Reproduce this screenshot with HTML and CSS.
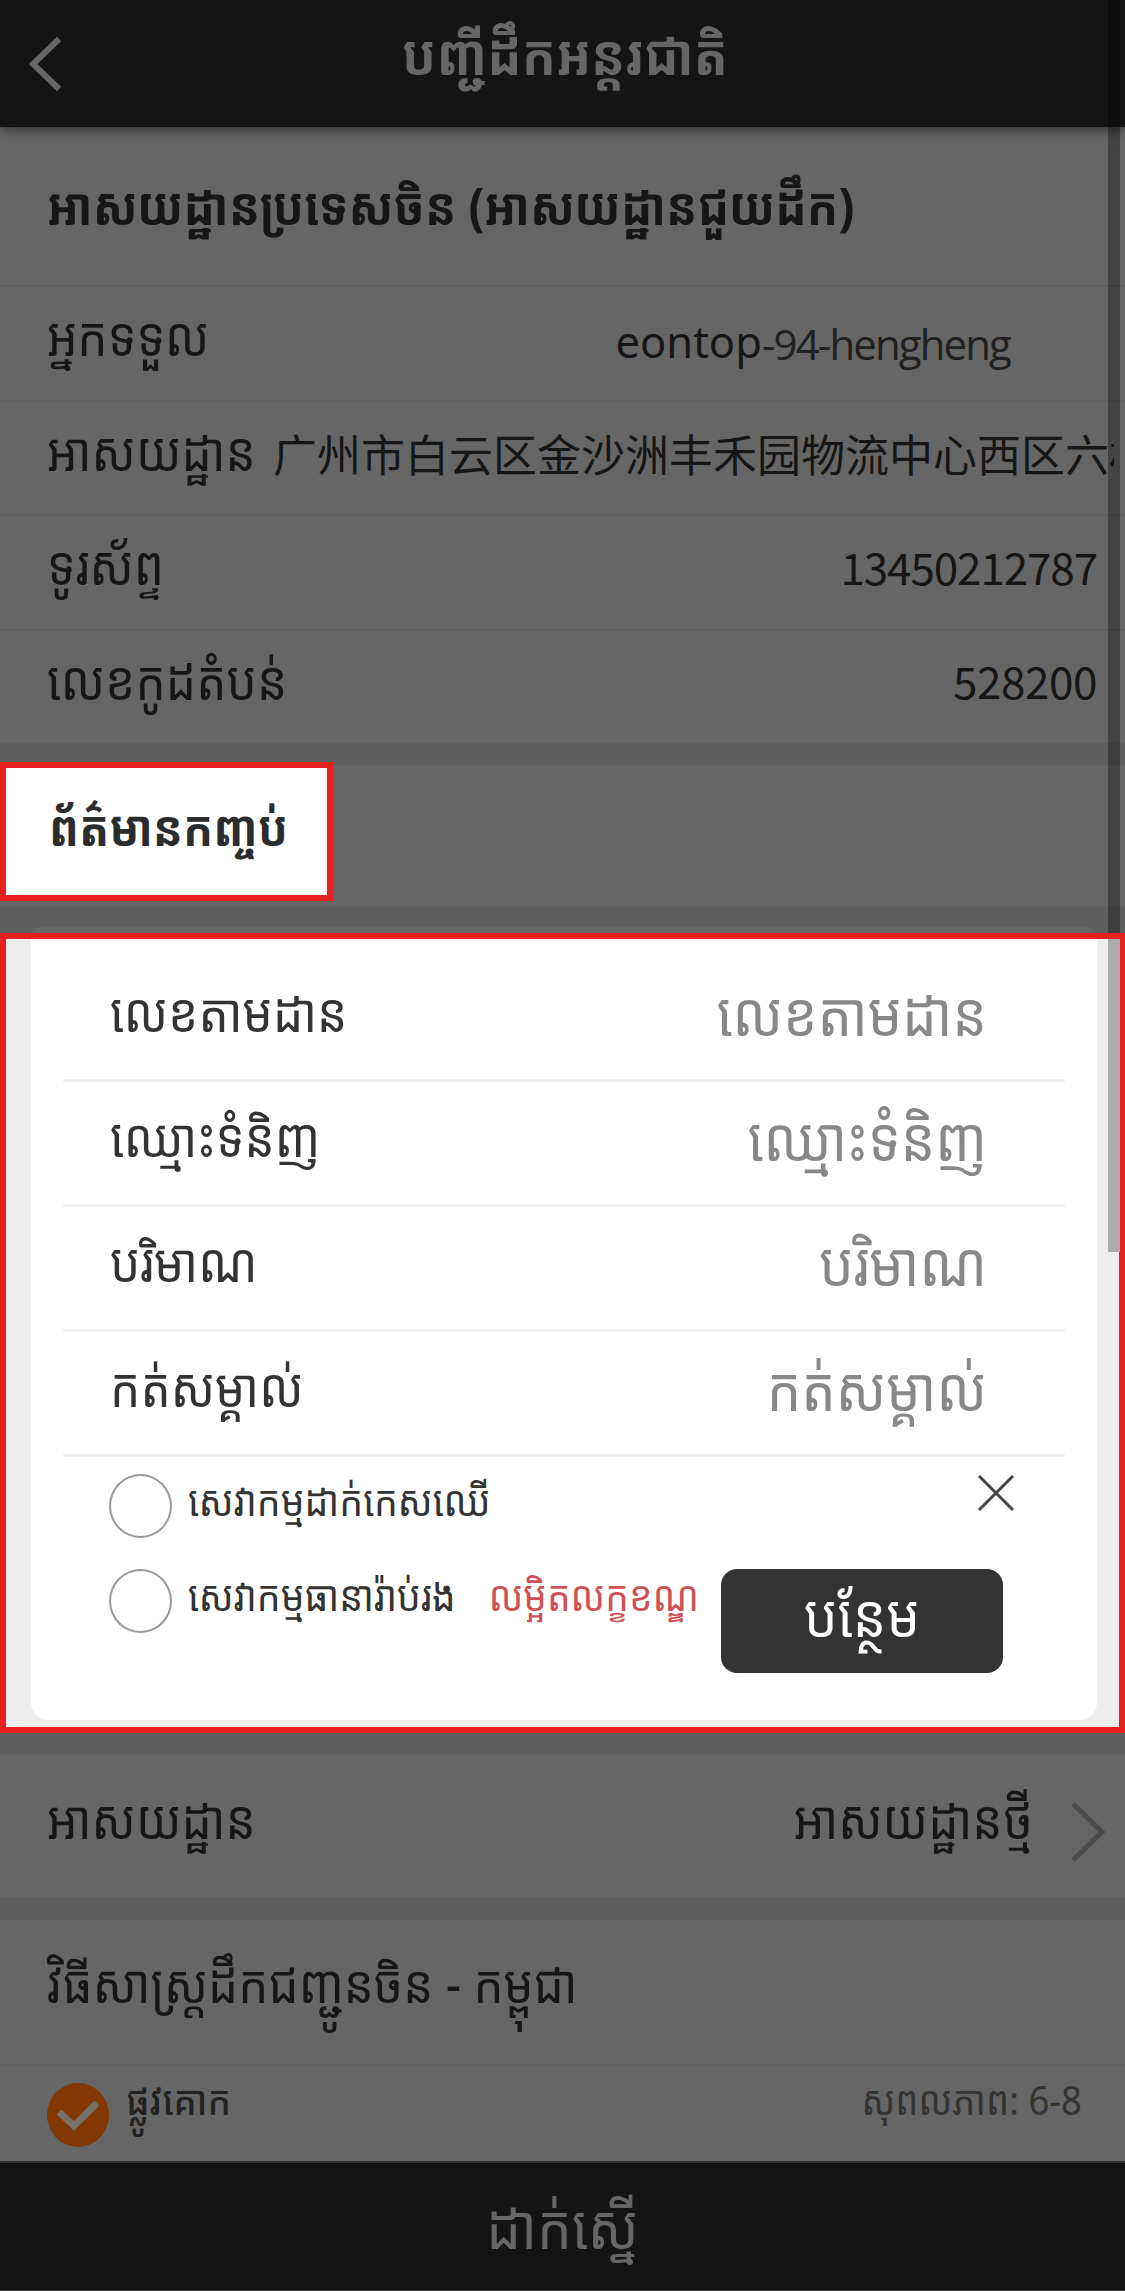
FILE: index.html
```html
<!DOCTYPE html>
<html lang="km">
<head>
<meta charset="utf-8">
<title>បញ្ជីដឹកអន្តរជាតិ</title>
<link rel="stylesheet" href="styles.css">
</head>
<body>
<div class="page">
  <header class="topbar">
    <svg class="back" width="34" height="58" viewBox="0 0 34 58"><path d="M31 4 5 29 31 54"/></svg>
    <h1 class="title"><span class="t">បញ្ជីដឹកអន្តរជាតិ</span></h1>
  </header>
  <main>
    <section class="china">
      <h2 class="heading"><span class="t">អាសយដ្ឋានប្រទេសចិន (អាសយដ្ឋានជួយដឹក)</span></h2>
      <div class="row"><span class="t">អ្នកទទួល</span><span class="receiver"><span class="eontop">eontop</span><span class="code">-94-hengheng</span></span></div>
      <div class="row"><span class="t">អាសយដ្ឋាន</span><span class="street">广州市白云区金沙洲丰禾园物流中心西区六栋</span></div>
      <div class="row"><span class="t">ទូរស័ព្ទ</span><span class="number">13450212787</span></div>
      <div class="row"><span class="t">លេខកូដតំបន់</span><span class="number postal">528200</span></div>
    </section>
    <section class="parcel-head">
      <h2 class="highlight-title"><span class="t">ព័ត៌មានកញ្ចប់</span></h2>
    </section>
    <section class="parcel">
      <div class="peek"></div>
      <div class="highlight">
        <form class="card">
          <div class="field"><span class="t">លេខតាមដាន</span><span class="t ph">លេខតាមដាន</span></div>
          <div class="field"><span class="t">ឈ្មោះទំនិញ</span><span class="t ph">ឈ្មោះទំនិញ</span></div>
          <div class="field"><span class="t">បរិមាណ</span><span class="t ph">បរិមាណ</span></div>
          <div class="field"><span class="t">កត់សម្គាល់</span><span class="t ph">កត់សម្គាល់</span></div>
          <div class="option">
            <span class="radio"></span><span class="t opt">សេវាកម្មដាក់កេសឈើ</span>
            <svg class="close" width="36" height="38" viewBox="0 0 36 38"><path d="M1 2 35 36M35 2 1 36"/></svg>
          </div>
          <div class="option">
            <span class="radio"></span><span class="t opt">សេវាកម្មធានារ៉ាប់រង</span>
            <span class="t opt terms">លម្អិតលក្ខខណ្ឌ</span>
            <span class="add"><span class="t">បន្ថែម</span></span>
          </div>
        </form>
      </div>
    </section>
    <section class="deliver">
      <span class="t">អាសយដ្ឋាន</span>
      <span class="t new">អាសយដ្ឋានថ្មី</span>
      <svg class="next" width="36" height="62" viewBox="0 0 36 62"><path d="M3 3 32 31 3 59"/></svg>
    </section>
    <section class="method">
      <h2 class="method-title"><span class="t">វិធីសាស្ត្រដឹកជញ្ជូនចិន - កម្ពុជា</span></h2>
      <div class="route">
        <svg class="check" width="62" height="64" viewBox="0 0 62 64"><ellipse cx="31" cy="32" rx="31" ry="32"/><path d="M12 29 27 43 50 20"/></svg>
        <span class="t land">ផ្លូវគោក</span>
        <span class="t valid">សុពលភាព: 6-8</span>
      </div>
    </section>
  </main>
  <footer class="submit"><span class="t">ដាក់ស្នើ</span></footer>
  <div class="scroll dim"></div>
  <div class="scroll lit"></div>
</div>
</body>
</html>
```
FILE: styles.css
```css
* { box-sizing: border-box; }
body { margin: 0; background: #666; }
h1, h2 { margin: 0; font-weight: 700; }
.page {
  position: relative;
  width: 1125px;
  height: 2291px;
  overflow: hidden;
  color: #161616;
  font: 47.8px/64px "Noto Sans Khmer", "Khmer OS", "Noto Sans", "Noto Sans CJK SC", sans-serif;
}
/* Khmer labels are set slightly taller than the font's own proportions */
.t { display: inline-block; flex: none; white-space: nowrap; transform: scaleY(1.12); }

.topbar {
  position: relative;
  height: 127px;
  background: #141414;
  box-shadow: 0 2px 12px rgba(0, 0, 0, .6);
  color: #666;
  padding-left: 28px;
  display: flex;
  align-items: center;
}
.back, .next, .close { flex: none; fill: none; stroke: #666; stroke-width: 6; }
.title { flex: 1; text-align: center; font-size: 50.7px; padding: 0 57px 19px 0; }

.heading { height: 158px; padding: 46px 0 0 47px; font-size: 46.4px; white-space: nowrap; }
.row {
  height: 114.5px;
  border-top: 2px solid #606060;
  padding: 0 28px 14px 47px;
  display: flex;
  align-items: center;
  justify-content: space-between;
  overflow: hidden;
}
.receiver { margin-right: 87px; padding-top: 9px; font-family: "Noto Sans", sans-serif; white-space: nowrap; }
.eontop { font-size: 43.5px; }
.code { position: relative; top: 2px; font-family: "Open Sans", sans-serif; font-size: 42px; letter-spacing: -1.9px; color: #202020; }
.street { flex: none; width: 841px; margin-right: -17px; padding-top: 4px; white-space: nowrap; font: 44px/60px "Noto Sans CJK SC", sans-serif; overflow: hidden; }
.number { font: 44px/60px "Noto Sans CJK SC", sans-serif; letter-spacing: -1.1px; padding-top: 1px; }
.postal { letter-spacing: -.4px; }

.parcel-head { height: 163px; border-top: 22px solid #5f5f5f; }
.highlight-title {
  position: relative;
  top: -3px;
  width: 333px;
  height: 139px;
  background: #fff;
  border: 6px solid #e5221f;
  color: #2b2c2e;
  padding: 27px 0 0 43px;
  font-size: 44.5px;
  white-space: nowrap;
}
.parcel { background: #5f5f5f; padding: 21px 0 22px; }
.peek { height: 6px; margin: 0 32px; background: #666; border-radius: 10px 10px 0 0; }
.highlight { height: 800px; background: #eee; border: 6px solid #e5221f; padding: 0 22px 0 25px; }
.card { height: 781px; background: #fff; border-radius: 4px 4px 18px 18px; padding: 18px 32px 0; }
.field {
  height: 125px;
  border-bottom: 3px solid #f1f1f1;
  padding: 0 78px 13px 47px;
  display: flex;
  align-items: center;
  justify-content: space-between;
  color: #333;
}
.ph { color: #888; font-size: 54.4px; }
.option { height: 95px; padding: 17px 51px 0 46px; display: flex; align-items: flex-start; }
.radio { flex: none; width: 63px; height: 64px; margin-right: 16px; border: 2px solid #999; border-radius: 50%; }
.opt { font-size: 37.6px; color: #333; line-height: 52px; }
.terms { color: #cf5155; margin-left: 33px; font-size: 37.3px; }
.option .close { margin-left: auto; stroke: #444; stroke-width: 3; }
.add {
  flex: none;
  width: 282px;
  height: 104px;
  margin-left: auto;
  margin-right: 11px;
  padding-bottom: 12px;
  background: #333;
  border-radius: 16px;
  color: #fff;
  font-size: 53px;
  display: flex;
  align-items: center;
  justify-content: center;
}
.deliver { height: 142px; padding: 0 19px 14px 47px; display: flex; align-items: center; }
.new { margin-left: auto; margin-right: 37px; }
.next { stroke: #4b4b4b; stroke-width: 5; margin-top: 26px; }
.method { border-top: 23px solid #5f5f5f; }
.method-title { height: 144px; font-weight: 400; font-size: 47.5px; padding: 31px 0 0 47px; }
.route { height: 97px; border-top: 2px solid #606060; padding: 17px 43px 0 47px; display: flex; font-size: 36.5px; line-height: 38px; color: #333; }
.check { flex: none; fill: #823800; margin-right: 17px; }
.check path { fill: none; stroke: #77736b; stroke-width: 7; }
.land { color: #222; font-weight: 500; }
.valid { margin-left: auto; }
.submit {
  height: 130px;
  background: #141414;
  border-top: 2px solid #333;
  border-bottom: 1px solid #444;
  padding-bottom: 4px;
  color: #666;
  font-size: 55px;
  display: flex;
  align-items: center;
  justify-content: center;
}
.scroll { position: absolute; left: 1108px; width: 12px; }
.dim { top: 0; height: 933px; background: rgba(0, 0, 0, .33); }
.lit { top: 939px; height: 313px; background: #aaacad; }
```
